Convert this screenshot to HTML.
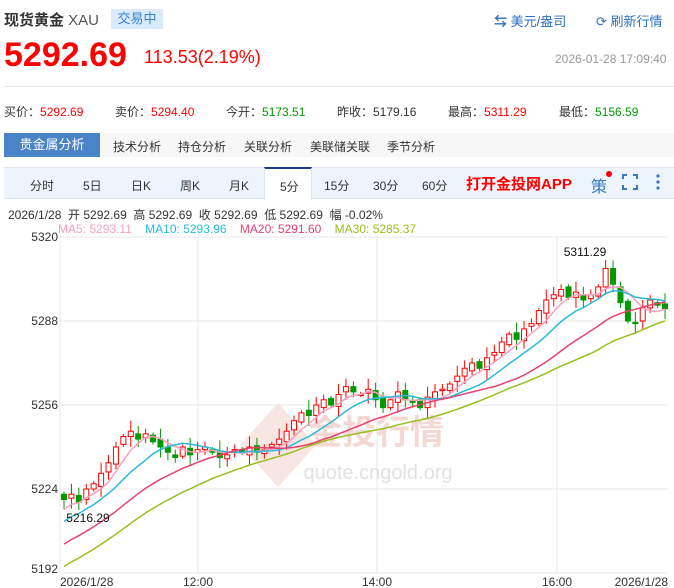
<!DOCTYPE html>
<html><head><meta charset="utf-8"><style>
*{margin:0;padding:0;box-sizing:border-box}
body{width:674px;height:588px;background:#fff;font-family:"Liberation Sans","Noto Sans CJK SC",sans-serif;position:relative;overflow:hidden;color:#333}
.a{position:absolute;white-space:nowrap}
.r{color:#f00}.g{color:#090}
</style></head><body>
<div class="a" style="left:4px;top:9px;font-size:15px;font-weight:bold;color:#333">现货黄金 <span style="font-weight:normal;color:#555">XAU</span></div>
<div class="a" style="left:111px;top:9px;width:52px;height:20px;background:#d9ebfb;color:#3b82c9;font-size:13px;line-height:20px;text-align:center">交易中</div>
<div class="a" style="left:494px;top:11px;font-size:13px;color:#2b6fc2"><b>⇆</b> 美元/盎司</div>
<div class="a" style="left:596px;top:11px;font-size:13px;color:#2b6fc2">⟳ 刷新行情</div>
<div class="a r" style="left:4px;top:36px;font-size:34px;font-weight:bold;letter-spacing:0px">5292.69</div>
<div class="a r" style="left:144px;top:47px;font-size:18px">113.53(2.19%)</div>
<div class="a" style="left:555px;top:52px;font-size:12px;color:#999">2026-01-28 17:09:40</div>
<div class="a" style="left:4px;top:86px;width:670px;height:1px;background:#e6e6e6"></div>
<div class="a" style="left:4px;top:103px;font-size:12px">买价：<span class="r">5292.69</span></div>
<div class="a" style="left:115px;top:103px;font-size:12px">卖价：<span class="r">5294.40</span></div>
<div class="a" style="left:226px;top:103px;font-size:12px">今开：<span class="g">5173.51</span></div>
<div class="a" style="left:337px;top:103px;font-size:12px">昨收：5179.16</div>
<div class="a" style="left:448px;top:103px;font-size:12px">最高：<span class="r">5311.29</span></div>
<div class="a" style="left:559px;top:103px;font-size:12px">最低：<span class="g">5156.59</span></div>
<div class="a" style="left:4px;top:133px;width:670px;height:24px;background:#f7f7f7"></div>
<div class="a" style="left:4px;top:133px;width:96px;height:24px;background:#4a84c8;color:#fff;font-size:13px;line-height:24px;text-align:center">贵金属分析</div>
<div class="a" style="left:113px;top:138px;font-size:12px;word-spacing:0">技术分析</div>
<div class="a" style="left:178px;top:138px;font-size:12px">持仓分析</div>
<div class="a" style="left:244px;top:138px;font-size:12px">关联分析</div>
<div class="a" style="left:310px;top:138px;font-size:12px">美联储关联</div>
<div class="a" style="left:387px;top:138px;font-size:12px">季节分析</div>
<div class="a" style="left:4px;top:167px;width:670px;height:32px;background:#eef4fc;border-top:1px solid #dfe6ef;border-bottom:1px solid #dfe6ef"></div>
<div class="a" style="left:264px;top:167px;width:48px;height:33px;background:#fff;border-top:2px solid #1f3d8a;border-left:1px solid #dfe6ef;border-right:1px solid #dfe6ef"></div>
<div class="a" style="left:30px;top:177px;font-size:12px">分时</div>
<div class="a" style="left:83px;top:177px;font-size:12px">5日</div>
<div class="a" style="left:131px;top:177px;font-size:12px">日K</div>
<div class="a" style="left:180px;top:177px;font-size:12px">周K</div>
<div class="a" style="left:229px;top:177px;font-size:12px">月K</div>
<div class="a" style="left:280px;top:178px;font-size:12px">5分</div>
<div class="a" style="left:324px;top:177px;font-size:12px">15分</div>
<div class="a" style="left:373px;top:177px;font-size:12px">30分</div>
<div class="a" style="left:422px;top:177px;font-size:12px">60分</div>
<div class="a r" style="left:466px;top:173px;font-size:15px;font-weight:bold">打开金投网APP</div>
<div class="a" style="left:591px;top:173px;font-size:16px;color:#3b78c4">策</div>
<div class="a" style="left:606px;top:171px;width:6px;height:6px;border-radius:3px;background:#e00"></div>
<svg class="a" style="left:622px;top:174px" width="16" height="16"><path d="M1 5V1h4M11 1h4v4M15 11v4h-4M5 15H1v-4" fill="none" stroke="#3b78c4" stroke-width="2"/></svg>
<svg class="a" style="left:655px;top:174px" width="6" height="16"><circle cx="3" cy="2" r="1.6" fill="#3b78c4"/><circle cx="3" cy="8" r="1.6" fill="#3b78c4"/><circle cx="3" cy="14" r="1.6" fill="#3b78c4"/></svg>
<div class="a" style="left:8px;top:206px;font-size:12px;color:#333">2026/1/28 &nbsp;开 5292.69 &nbsp;高 5292.69 &nbsp;收 5292.69 &nbsp;低 5292.69 &nbsp;幅 -0.02%</div>
<div class="a" style="left:58px;top:222px;font-size:12px"><span style="color:#f7a1bf">MA5: 5293.11</span>&nbsp;&nbsp;&nbsp;&nbsp;<span style="color:#2ab9d9">MA10: 5293.96</span>&nbsp;&nbsp;&nbsp;&nbsp;<span style="color:#e9416f">MA20: 5291.60</span>&nbsp;&nbsp;&nbsp;&nbsp;<span style="color:#97bf1d">MA30: 5285.37</span></div>
<svg id="c" class="a" style="left:0;top:0" width="674" height="588"></svg>
<script>
var s='';
var Y=function(v){return 573-(v-5192)*2.625};
[5320,5288,5256,5224,5192].forEach(function(v){var y=Y(v);s+='<line x1="60" x2="668" y1="'+y+'" y2="'+y+'" stroke="#e8e8e8"/><text x="58" y="'+(v==5192?573:y+4)+'" text-anchor="end" font-size="12" fill="#333">'+v+'</text>';});
[[198,'12:00'],[377,'14:00'],[557,'16:00']].forEach(function(a){s+='<line x1="'+a[0]+'" x2="'+a[0]+'" y1="236" y2="573" stroke="#e8e8e8"/><text x="'+a[0]+'" y="586" text-anchor="middle" font-size="12" fill="#333">'+a[1]+'</text>';});
s+='<line x1="60" x2="60" y1="236" y2="573" stroke="#e8e8e8"/>';
s+='<text x="60" y="586" font-size="12" fill="#333">2026/1/28</text><text x="668" y="586" text-anchor="end" font-size="12" fill="#333">2026/1/28</text>';
s+='<path d="M240 445l38-42 38 42-38 42z" fill="#f8e6e3"/>';
s+='<text x="376" y="444" text-anchor="middle" font-size="34" font-weight="bold" fill="#f4d8d4" font-family="Noto Sans CJK SC">金投行情</text>';
s+='<text x="378" y="479" text-anchor="middle" font-size="20" fill="#e2e2e2">quote.cngold.org</text>';
var c=[5220,5222,5219,5224,5226,5230,5234,5240,5244,5246,5243,5245,5242,5240,5238,5236,5240,5237,5239,5240,5238,5236,5237,5239,5238,5240,5238,5239,5241,5243,5246,5250,5253,5252,5256,5258,5256,5260,5263,5261,5260,5262,5258,5255,5258,5261,5258,5257,5255,5259,5261,5262,5264,5267,5270,5272,5270,5274,5276,5280,5283,5281,5285,5287,5292,5296,5298,5300,5297,5299,5296,5298,5301,5308,5302,5295,5288,5287,5293,5296,5294,5292.7];
var pre=[];for(var i=0;i<30;i++)pre.push(5168+i*1.7+((i*7)%5)-2);
var all=pre.concat(c);
var n=c.length,dx=(665-64)/(n-1);
function X(i){return 64+i*dx}
for(var i=0;i<n;i++){
 var op=i==0?5222:c[i-1]+(((i*13)%5)-2)*0.5, cl=c[i];
 var hi=Math.max(op,cl)+1+((i*7)%4), lo=Math.min(op,cl)-1-((i*11)%4);
 if(i==0)lo=5216.29; if(i==73){hi=5311.29;op=5301;}
 var up=cl>=op,col=up?'#f00':'#090',x=X(i);
 var t=Y(Math.max(op,cl)),b=Y(Math.min(op,cl));if(b-t<1)b=t+1;
 s+='<line x1="'+x+'" x2="'+x+'" y1="'+Y(hi)+'" y2="'+Y(lo)+'" stroke="'+col+'"/>';
 s+='<rect x="'+(x-2.5)+'" y="'+t+'" width="5" height="'+(b-t)+'" fill="'+(up?'#fff':col)+'" stroke="'+col+'"/>';
}
[[5,'#f7a1bf'],[10,'#2ab9d9'],[20,'#e9416f'],[30,'#97bf1d']].forEach(function(m){
 var p='';for(var i=0;i<n;i++){var k=i+30,sum=0;for(var j=0;j<m[0];j++)sum+=all[k-j];p+=(i?'L':'M')+X(i).toFixed(1)+' '+Y(sum/m[0]).toFixed(1);}
 s+='<path d="'+p+'" fill="none" stroke="'+m[1]+'" stroke-width="1.5"/>';
});
s+='<text x="585" y="256" text-anchor="middle" font-size="12" fill="#111">5311.29</text>';
s+='<text x="88" y="522" text-anchor="middle" font-size="12" fill="#111">5216.29</text>';
document.getElementById('c').innerHTML=s;
</script>
</body></html>
